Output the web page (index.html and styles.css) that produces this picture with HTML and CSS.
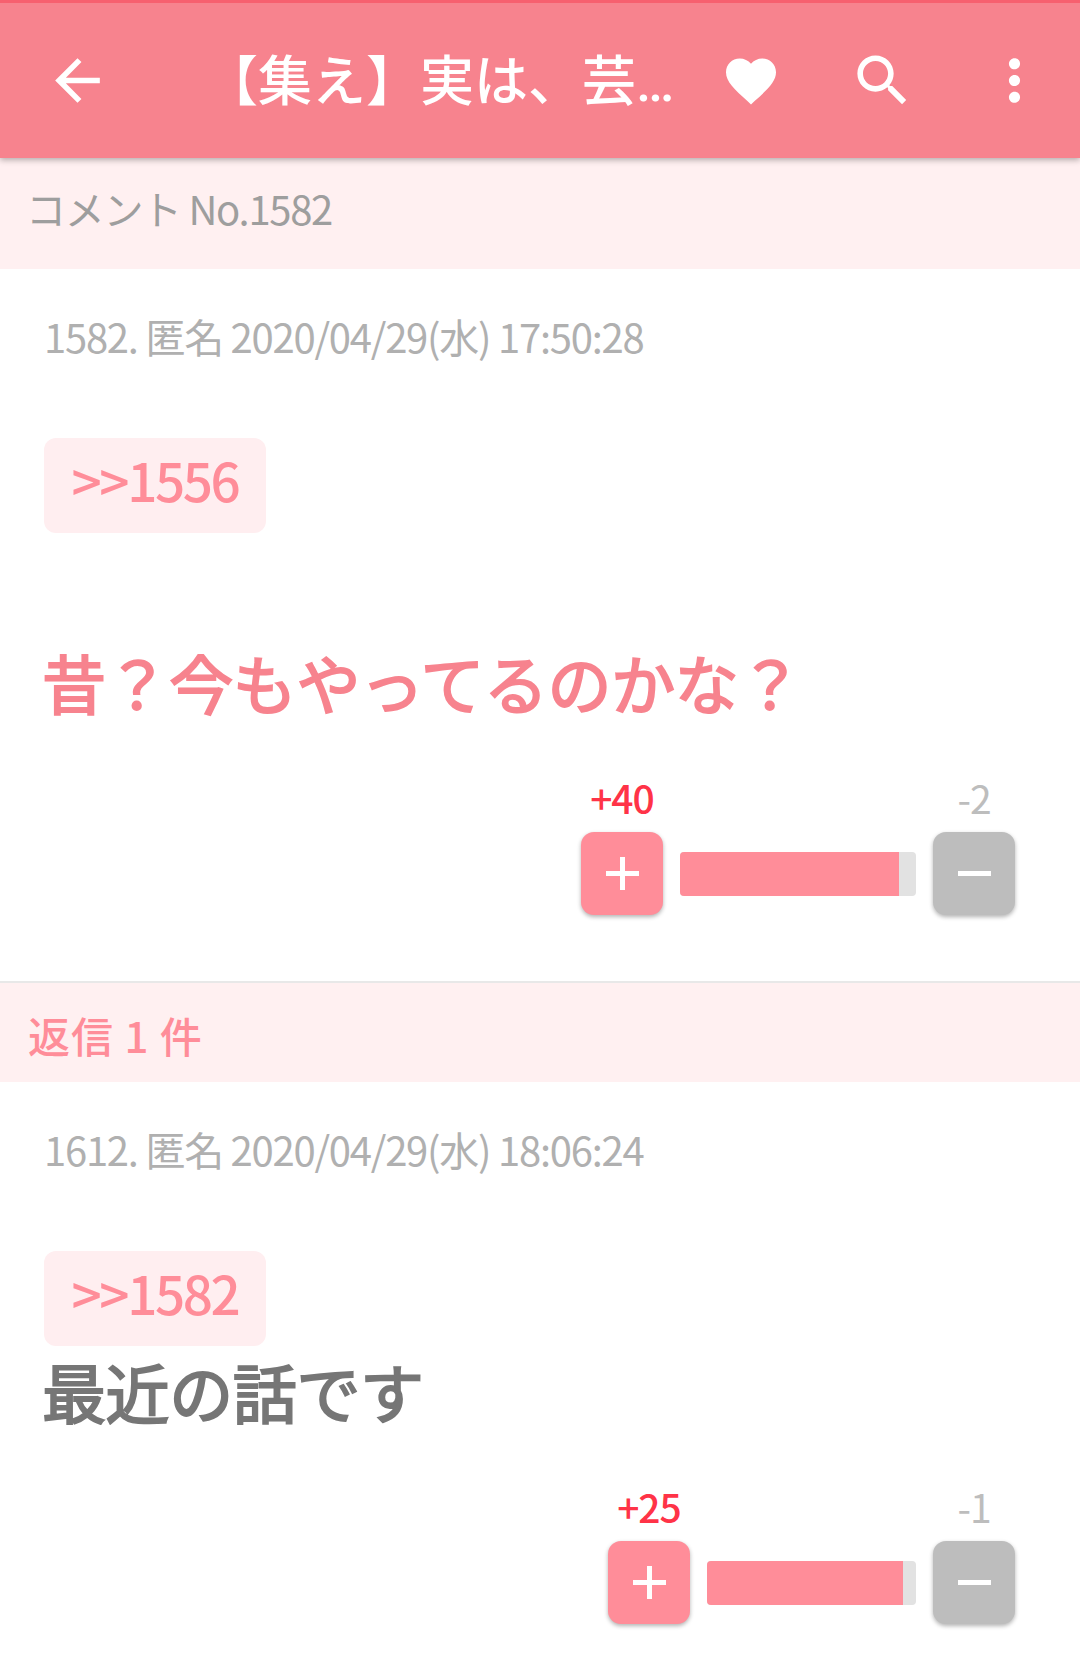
FILE: index.html
```html
<!DOCTYPE html>
<html lang="ja">
<head>
<meta charset="utf-8">
<title>コメント No.1582</title>
<link rel="stylesheet" href="styles.css">
</head>
<body>
<header class="toolbar">
  <svg class="icon icon-back" viewBox="0 0 24 24"><path d="M20 11H7.83l5.59-5.59L12 4l-8 8 8 8 1.41-1.41L7.83 13H20v-2z"/></svg>
  <h1 class="title">【集え】実は、芸…</h1>
  <svg class="icon icon-heart" viewBox="0 0 24 24"><path d="M12 21.35l-1.45-1.32C5.4 15.36 2 12.28 2 8.5 2 5.42 4.42 3 7.5 3c1.74 0 3.41.81 4.5 2.09C13.09 3.81 14.76 3 16.5 3 19.58 3 22 5.42 22 8.5c0 3.78-3.4 6.86-8.55 11.54L12 21.35z"/></svg>
  <svg class="icon icon-search" viewBox="0 0 24 24"><path d="M15.5 14h-.79l-.28-.27C15.41 12.59 16 11.11 16 9.5 16 5.91 13.09 3 9.5 3S3 5.91 3 9.5 5.91 16 9.5 16c1.61 0 3.09-.59 4.23-1.57l.27.28v.79l5 4.99L20.49 19l-4.99-5zm-6 0C7.01 14 5 11.99 5 9.5S7.01 5 9.5 5 14 7.01 14 9.5 11.99 14 9.5 14z"/></svg>
  <svg class="icon icon-more" viewBox="0 0 24 24"><path d="M12 8c1.1 0 2-.9 2-2s-.9-2-2-2-2 .9-2 2 .9 2 2 2zm0 2c-1.1 0-2 .9-2 2s.9 2 2 2 2-.9 2-2-.9-2-2-2zm0 6c-1.1 0-2 .9-2 2s.9 2 2 2 2-.9 2-2-.9-2-2-2z"/></svg>
</header>

<div class="band band-top">コメント No.1582</div>

<article class="post post-main">
  <p class="meta">1582. 匿名 2020/04/29(水) 17:50:28</p>
  <a class="chip">&gt;&gt;1556</a>
  <p class="body body-pink">昔？今もやってるのかな？</p>
  <div class="votes votes-main">
    <div class="vote-col">
      <span class="count count-plus">+40</span>
      <button class="vote vote-plus"><span class="glyph glyph-plus"></span></button>
    </div>
    <div class="bar bar-main"><div class="fill" style="width:93%"></div></div>
    <div class="vote-col">
      <span class="count count-minus">-2</span>
      <button class="vote vote-minus"><span class="glyph"></span></button>
    </div>
  </div>
</article>

<div class="band band-reply">返信 1 件</div>

<article class="post post-reply">
  <p class="meta">1612. 匿名 2020/04/29(水) 18:06:24</p>
  <a class="chip">&gt;&gt;1582</a>
  <p class="body body-grey">最近の話です</p>
  <div class="votes votes-reply">
    <div class="vote-col">
      <span class="count count-plus">+25</span>
      <button class="vote vote-plus"><span class="glyph glyph-plus"></span></button>
    </div>
    <div class="bar bar-reply"><div class="fill" style="width:94%"></div></div>
    <div class="vote-col">
      <span class="count count-minus">-1</span>
      <button class="vote vote-minus"><span class="glyph"></span></button>
    </div>
  </div>
</article>
</body>
</html>
```

FILE: styles.css
```css
* { box-sizing: border-box; }
html, body { margin: 0; padding: 0; }
body {
  width: 1080px;
  height: 1669px;
  overflow: hidden;
  background: #fff;
  font-family: "Noto Sans CJK JP", "Noto Sans", sans-serif;
}
.toolbar {
  height: 158px;
  border-top: 3px solid #f7606f;
  background: #f7838e;
  display: flex;
  align-items: center;
  position: relative;
  box-shadow: 0 2px 6px rgba(0, 0, 0, .3);
}
.icon { width: 67px; height: 67px; fill: #fff; flex: none; }
.icon-back { margin-left: 44px; }
.title {
  margin: 4px 0 0 93px;
  width: 463px;
  flex: none;
  font-family: Roboto, "Noto Sans CJK JP", sans-serif;
  font-size: 54px;
  line-height: 70px;
  font-weight: 500;
  color: #fff;
  white-space: nowrap;
}
.icon-heart { width: 60px; height: 60px; margin-left: 54px; }
.icon-search { margin-left: 68px; }
.icon-more { margin-left: 65px; }
.band { background: #fff0f1; }
.band-top { height: 111px; padding-left: 26px; line-height: 100px; color: #9e9e9e; font-size: 40px; letter-spacing: -1.3px; }
.band-reply { height: 99px; padding-left: 28px; line-height: 104px; color: #ff8d99; font-size: 42px; letter-spacing: 1px; font-weight: 500; }
.post { padding: 0 65px 0 44px; }
.post-main { height: 714px; padding-top: 41px; border-bottom: 2px solid #e8e8e8; }
.post-reply { padding-top: 41px; }
.meta {
  margin: 0;
  font-size: 40px;
  line-height: 52px;
  letter-spacing: -1.25px;
  color: #b0b0b0;
}
.chip {
  display: block;
  width: 222px;
  height: 95px;
  margin-top: 76px;
  border-radius: 12px;
  background: #ffeef0;
  color: #ff8d99;
  font-size: 53px;
  font-weight: 500;
  line-height: 82px;
  text-align: center;
  letter-spacing: -2.4px;
}
.body {
  margin: 0 0 0 -2px;
  font-size: 64px;
  line-height: 80px;
  font-weight: 400;
  letter-spacing: -0.4px;
  -webkit-text-stroke: 2px currentColor;
}
.body-pink { margin-top: 108px; color: #f7838e; }
.body-grey { margin-top: 4px; color: #767676; }
.votes { display: flex; justify-content: flex-end; align-items: flex-end; gap: 17px; }
.votes-main { margin-top: 53px; }
.votes-reply { margin-top: 53px; }
.vote-col { display: flex; flex-direction: column; align-items: center; width: 82px; }
.count { font-size: 39px; line-height: 46px; letter-spacing: -1px; margin-bottom: 12px; white-space: nowrap; }
.count-plus { color: #ff3347; font-weight: 500; }
.count-minus { color: #bdbdbd; }
.vote {
  width: 82px;
  height: 83px;
  border: 0;
  padding: 0;
  border-radius: 13px;
  display: flex;
  align-items: center;
  justify-content: center;
  box-shadow: 0 2px 4px rgba(0, 0, 0, .3);
}
.vote-plus { background: #ff8d99; }
.vote-minus { background: #bdbdbd; }
.glyph { display: block; width: 33px; height: 5px; background: #fff; position: relative; }
.glyph-plus::after {
  content: "";
  position: absolute;
  left: 14px;
  top: -14px;
  width: 5px;
  height: 33px;
  background: #fff;
}
.bar {
  height: 44px;
  margin-bottom: 19px;
  background: #e2e2e2;
  border-radius: 4px;
  overflow: hidden;
}
.bar-main { width: 236px; }
.bar-reply { width: 209px; }
.fill { height: 100%; background: #ff8d99; }
```
